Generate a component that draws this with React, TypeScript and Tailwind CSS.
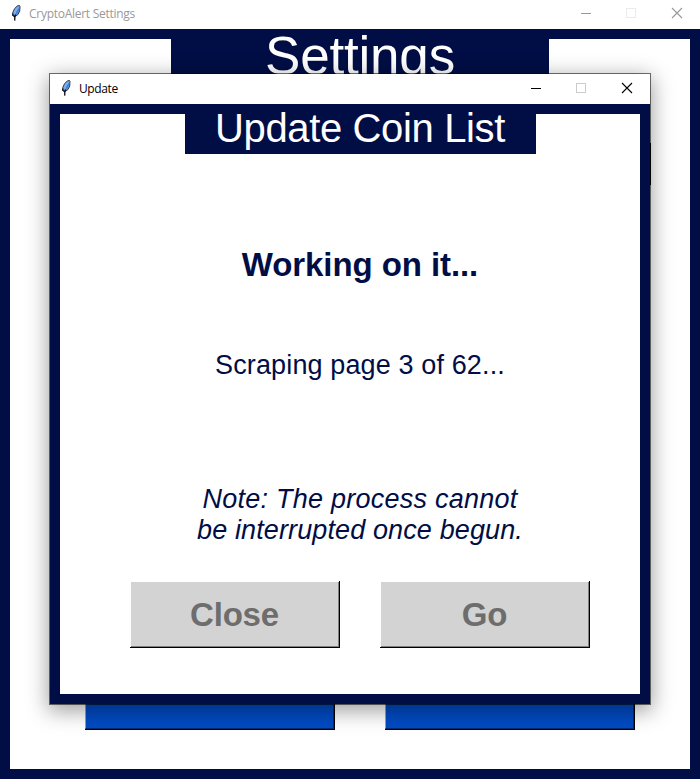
import React from "react";

const sans = "font-['Liberation_Sans',Arial,sans-serif]";

function Feather() {
  return (
    <svg width="16" height="16" viewBox="0 0 16 16" className="block shrink-0">
      <path d="M11.5 .5 9.3 1 6.6 3.6 4.9 7.2 4.6 10.3 6.7 11.8 9.8 9.7 11.7 6.2 12 1.6Z" fill="#79aef0" stroke="#30353c" strokeWidth="1" />
      <path d="M11.2 1.8 11 5.7 9.2 9.1 7.1 10.6 8.2 7Z" fill="#3f80d6" />
      <path d="M7.6 9.4 6.9 11 6.7 15.6" fill="none" stroke="#05080d" strokeWidth="1.3" />
      <path d="M4.9 8.6V11M5.7 10.5 6.5 12" fill="none" stroke="#05080d" strokeWidth="1.1" />
    </svg>
  );
}

function TitleBar({ title, active }: { title: string; active?: boolean }) {
  const ink = active ? "#000000" : "#999999";
  const faint = active ? "#cccccc" : "#ebebeb";
  return (
    <header className={`flex items-start bg-white pl-2 ${active ? "h-[30px] pt-[6px]" : "h-[29px] pt-[5px]"}`}>
      <Feather />
      <span
        className={`ml-[5px] grow font-['Open_Sans','Noto_Sans',sans-serif] text-[12px] leading-[17px] ${
          active ? "tracking-[-0.4px] text-black" : "tracking-[-0.27px] text-[#999999]"
        }`}
      >
        {title}
      </span>
      <svg
        width="107"
        height="12"
        viewBox="0 0 107 12"
        shapeRendering="crispEdges"
        className="mr-[17px] mt-[2px] block shrink-0"
      >
        <path d="M5 6.5H15" stroke={ink} />
        <rect x="50.5" y="1.5" width="9" height="9" fill="none" stroke={faint} />
        <path d="M96 1 106 11M106 1 96 11" stroke={ink} strokeWidth="1.1" shapeRendering="auto" />
      </svg>
    </header>
  );
}

function DisabledButton({ label }: { label: string }) {
  return (
    <button
      disabled
      className="flex h-[67px] w-[210px] items-center justify-center border-b border-r border-black bg-white pl-px pt-px"
    >
      <span className="flex h-full w-full items-center justify-center border-b border-r border-[#808080] bg-[#d3d3d3] pt-[2px] text-[33px] font-bold tracking-[-0.2px] text-[#6d6d6d]">
        {label}
      </span>
    </button>
  );
}

function BlueButton() {
  return (
    <button className="h-[67px] w-[250px] border-b border-r border-black">
      <span className="block h-full w-full border-b border-l border-r border-b-[#002a70] border-l-[#80a5e0] border-r-[#002a70] bg-[#004bc4]" />
    </button>
  );
}

export default function App() {
  return (
    <div className={`relative flex h-[779px] w-[700px] flex-col overflow-hidden bg-white ${sans}`}>
      <TitleBar title="CryptoAlert Settings" />
      <main className="flex grow flex-col border-[10px] border-[#000e45] bg-white">
        <h1 className="-mt-[10px] ml-[20px] flex h-[80px] w-[378px] justify-center self-center bg-[#000e45] text-[53px] leading-[54px] tracking-[-0.2px] text-white">
          Settings
        </h1>
        <div className="mr-[39px] mt-[34px] h-[42px] w-[250px] self-end bg-black" />
        <div className="mb-[39px] mt-auto flex gap-[50px] pl-[75px]">
          <BlueButton />
          <BlueButton />
        </div>
      </main>

      <section className="absolute left-[49px] top-[73px] flex h-[632px] w-[602px] flex-col border border-black/55 bg-white bg-clip-padding shadow-[0_5px_20px_1px_rgba(0,0,0,0.38)]">
        <TitleBar title="Update" active />
        <div className="flex grow flex-col items-center border-[10px] border-[#000e45] bg-white pl-[20px] text-[#000e45]">
          <h2 className="ml-px flex h-[40px] w-[351px] justify-center bg-[#000e45] pr-px text-[40px] leading-[28px] tracking-[-0.37px] text-white">
            Update Coin List
          </h2>
          <p className="mt-[91px] text-[33px] font-bold leading-[40px] tracking-[-0.08px]">Working on it...</p>
          <p className="mt-[64px] text-[27px] leading-[32px] tracking-[0.13px]">Scraping page 3 of 62...</p>
          <p className="mt-[103px] text-center text-[27px] italic leading-[31px] tracking-[0.25px]">
            Note: The process cannot
            <br />
            <span className="tracking-[0.12px]">be interrupted once begun.</span>
          </p>
          <div className="mb-[46px] mt-auto flex gap-[40px]">
            <DisabledButton label="Close" />
            <DisabledButton label="Go" />
          </div>
        </div>
      </section>
    </div>
  );
}
